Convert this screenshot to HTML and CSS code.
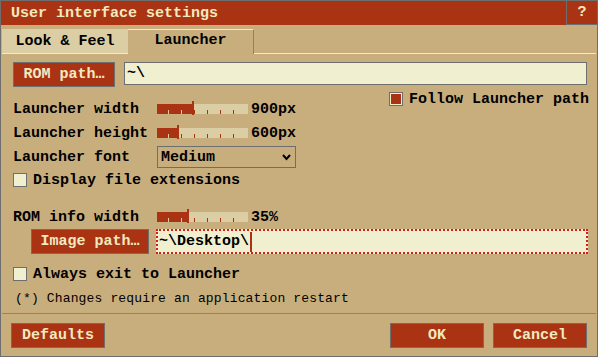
FILE: index.html
```html
<!DOCTYPE html>
<html lang="en">
<head>
    <meta charset="UTF-8">
    <title>User interface settings</title>
    <link rel="stylesheet" href="styles.css">
</head>
<body>
    <div class="window">
        <div class="titlebar">
            <span class="title">User interface settings</span>
            <span class="help">?</span>
        </div>

        <div class="tabs">
            <div class="tab">Look &amp; Feel</div>
            <div class="tab active">Launcher</div>
            <div class="tab-rest"></div>
        </div>

        <div class="panel">
            <div class="row path-row">
                <div class="button">ROM path…</div>
                <div class="field">~\</div>
            </div>

            <div class="row follow-row">
                <span class="check checked"></span>
                <span class="check-label">Follow Launcher path</span>
            </div>

            <div class="row slider-row first-slider">
                <span class="label">Launcher width</span>
                <div class="slider"><div class="fill" style="width: 37px"></div></div>
                <span class="value">900px</span>
            </div>

            <div class="row slider-row">
                <span class="label">Launcher height</span>
                <div class="slider"><div class="fill" style="width: 22px"></div></div>
                <span class="value">600px</span>
            </div>

            <div class="row font-row">
                <span class="label">Launcher font</span>
                <div class="select">
                    <span>Medium</span>
                    <svg width="9" height="7" viewBox="0 0 9 7">
                        <polyline points="1,1 4.5,5 8,1" fill="none" stroke="#000" stroke-width="2"/>
                    </svg>
                </div>
            </div>

            <div class="row check-row ext-row">
                <span class="check"></span>
                <span class="check-label">Display file extensions</span>
            </div>

            <div class="row slider-row info-row">
                <span class="label">ROM info width</span>
                <div class="slider"><div class="fill" style="width: 32px"></div></div>
                <span class="value">35%</span>
            </div>

            <div class="row image-row">
                <div class="button">Image path…</div>
                <div class="field focused">~\Desktop\<span class="cursor"></span></div>
            </div>

            <div class="row check-row exit-row">
                <span class="check"></span>
                <span class="check-label">Always exit to Launcher</span>
            </div>

            <div class="note">(*) Changes require an application restart</div>
        </div>

        <div class="footer">
            <div class="button">Defaults</div>
            <div class="footer-right">
                <div class="button">OK</div>
                <div class="button">Cancel</div>
            </div>
        </div>
    </div>
</body>
</html>
```

FILE: styles.css
```css
* {
    box-sizing: border-box;
}
body {
    margin: 0;
    font-family: "Liberation Mono", "DejaVu Sans Mono", monospace;
    font-size: 15px;
    font-weight: bold;
    color: #000;
}
.window {
    width: 598px;
    height: 357px;
    border: 1px solid #6e6e6e;
    background-color: #c9ae7d;
    display: flex;
    flex-direction: column;
}
.titlebar {
    height: 24px;
    background-color: #a93312;
    color: #f2e9bf;
    display: flex;
    justify-content: space-between;
    align-items: center;
}
.title {
    padding-left: 10px;
}
.help {
    width: 31px;
    height: 24px;
    border-left: 1px solid #6e6e6e;
    border-bottom: 1px solid #6e6e6e;
    display: flex;
    align-items: center;
    justify-content: center;
}
.tabs {
    display: flex;
    height: 25px;
    margin-top: 4px;
    padding-left: 1px;
}
.tab {
    width: 126px;
    height: 25px;
    background-color: #dbcda4;
    border-bottom: 1px solid #f5ebbe;
    display: flex;
    align-items: center;
    justify-content: center;
}
.tab.active {
    background-color: #c9ae7d;
    border-top: 1px solid #f5ebbe;
    border-right: 1px solid #9a8058;
    border-bottom: none;
    padding-bottom: 4px;
}
.tab-rest {
    flex: 1;
    border-bottom: 1px solid #f5ebbe;
    margin-right: 1px;
}
.panel {
    padding: 0 10px 0 12px;
    display: flex;
    flex-direction: column;
}
.row {
    display: flex;
    align-items: center;
}
.button {
    height: 25px;
    background-color: #a93312;
    border: 1px solid #6e6e6e;
    color: #f2e9bf;
    display: flex;
    align-items: center;
    justify-content: center;
}
.field {
    flex: 1;
    background-color: #f0f0d0;
    border: 1px solid #6e6e6e;
    display: flex;
    align-items: center;
    padding-left: 2px;
}
.path-row {
    margin-top: 8px;
    align-items: flex-start;
}
.path-row .button {
    width: 102px;
}
.path-row .field {
    height: 23px;
    margin-left: 9px;
}
.follow-row {
    margin-top: 5px;
    height: 14px;
    justify-content: flex-end;
    margin-right: -2px;
}
.check {
    width: 14px;
    height: 14px;
    border: 1px solid #6e6e6e;
    background-color: #f0f0d0;
}
.check.checked {
    background-color: #a93312;
    box-shadow: inset 0 0 0 1px #f0f0d0;
}
.check-label {
    margin-left: 6px;
}
.slider-row {
    height: 12px;
    margin-top: 12px;
}
.first-slider {
    margin-top: -3px;
}
.label {
    width: 144px;
    white-space: nowrap;
}
.slider {
    position: relative;
    width: 91px;
    height: 10px;
    background-color: #dbcda4;
    background-image: repeating-linear-gradient(to right, transparent 0, transparent 11px, #a93312 11px, #a93312 12px, transparent 12px, transparent 13px);
    background-size: 80px 4px;
    background-position: left bottom;
    background-repeat: no-repeat;
}
.fill {
    position: absolute;
    left: 0;
    top: 0;
    height: 10px;
    background-color: #a93312;
    background-image: repeating-linear-gradient(to right, transparent 0, transparent 11px, #dbcda4 11px, #dbcda4 12px, transparent 12px, transparent 13px);
    background-size: 80px 4px;
    background-position: left bottom;
    background-repeat: no-repeat;
}
.fill::after {
    content: "";
    position: absolute;
    right: 0;
    top: -3px;
    width: 2px;
    height: 14px;
    background-color: #a93312;
}
.value {
    margin-left: 3px;
}
.font-row {
    margin-top: 7px;
    height: 22px;
}
.select {
    width: 139px;
    height: 22px;
    border: 1px solid #6e6e6e;
    display: flex;
    align-items: center;
    justify-content: space-between;
    padding: 0 4px 0 3px;
}
.check-row {
    height: 14px;
}
.ext-row {
    margin-top: 5px;
}
.info-row {
    margin-top: 24px;
}
.image-row {
    margin-top: 6px;
}
.image-row .button {
    width: 118px;
    margin-left: 18px;
}
.image-row .field {
    height: 25px;
    margin-left: 7px;
    margin-right: -1px;
    border: 2px dotted #d41c1c;
    padding-left: 1px;
}
.cursor {
    width: 2px;
    height: 20px;
    background-color: #a93312;
    margin-left: 1px;
}
.exit-row {
    margin-top: 13px;
}
.note {
    margin-top: 11px;
    height: 14px;
    line-height: 14px;
    font-size: 13px;
    font-weight: normal;
    letter-spacing: 0.15px;
    padding-left: 2px;
}
.footer {
    margin: auto 1px 0 1px;
    border-top: 1px solid #9c8259;
    padding: 9px 9px 8px 9px;
    display: flex;
    justify-content: space-between;
}
.footer .button {
    width: 94px;
}
.footer-right {
    display: flex;
    gap: 9px;
}
```
